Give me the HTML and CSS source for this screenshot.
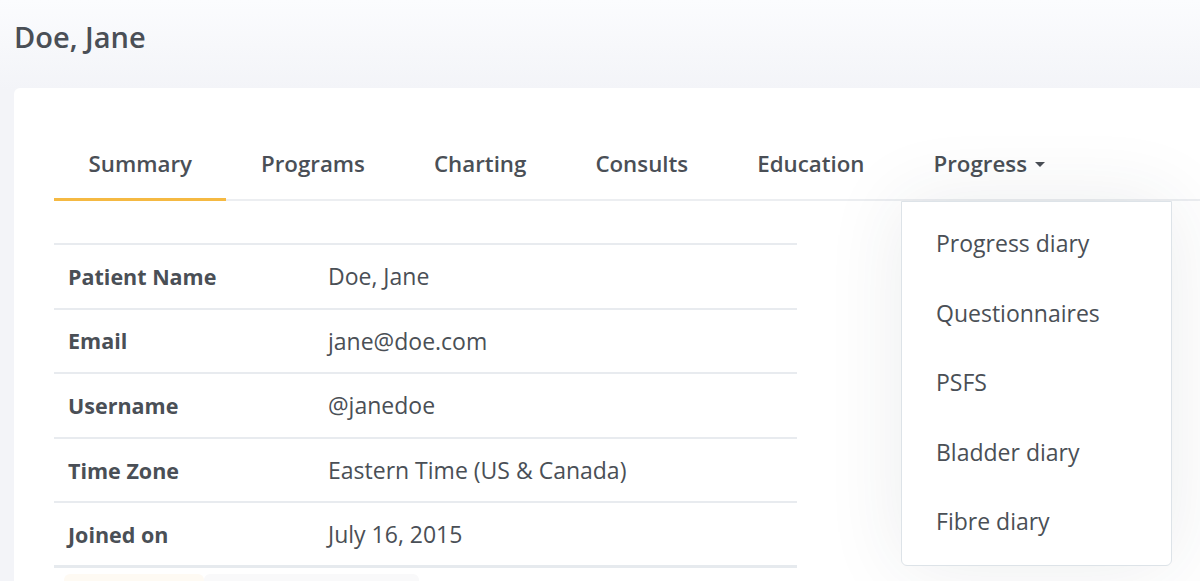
FILE: index.html
```html
<!DOCTYPE html>
<html lang="en">
<head>
<meta charset="utf-8">
<title>Doe, Jane</title>
<link rel="stylesheet" href="styles.css">
</head>
<body>
<header class="page-head">
  <h1 class="page-title">Doe, Jane</h1>
</header>
<main class="card">
  <nav class="tabs">
    <a class="tab active" href="#">Summary</a>
    <a class="tab" href="#">Programs</a>
    <a class="tab" href="#">Charting</a>
    <a class="tab" href="#">Consults</a>
    <a class="tab" href="#">Education</a>
    <div class="tab-wrap">
      <a class="tab dropdown-toggle" href="#">Progress<span class="caret"></span></a>
      <ul class="dropdown">
        <li><a href="#">Progress diary</a></li>
        <li><a href="#">Questionnaires</a></li>
        <li><a href="#">PSFS</a></li>
        <li><a href="#">Bladder diary</a></li>
        <li><a href="#">Fibre diary</a></li>
      </ul>
    </div>
  </nav>
  <table class="info">
    <tbody>
      <tr><th>Patient Name</th><td>Doe, Jane</td></tr>
      <tr><th>Email</th><td>jane@doe.com</td></tr>
      <tr><th>Username</th><td>@janedoe</td></tr>
      <tr><th>Time Zone</th><td>Eastern Time (US &amp; Canada)</td></tr>
      <tr><th>Joined on</th><td>July 16, 2015</td></tr>
    </tbody>
  </table>
  <div class="actions">
    <span class="ghost ghost-primary"></span>
    <span class="ghost ghost-secondary"></span>
  </div>
</main>
</body>
</html>
```

FILE: styles.css
```css
* { box-sizing: border-box; }
html, body { height: 100%; }
body {
  margin: 0;
  font-family: "Open Sans", Lato, sans-serif;
  color: #4a4f56;
  background: linear-gradient(#fbfcfe 0px, #f3f4f8 90px, #f3f4f8 100%);
  overflow: hidden;
}
a { color: inherit; text-decoration: none; }

.page-head {
  height: 88px;
  padding: 19px 14px 0;
}
.page-title {
  margin: 0;
  font-size: 29px;
  font-weight: 600;
  line-height: 36px;
}

.card {
  margin-left: 14px;
  background: #fff;
  border-radius: 6px 0 0 0;
  padding: 32px 0 0 40px;
  height: 600px;
}

.tabs {
  display: flex;
  border-bottom: 2px solid #eceef1;
}
.tab {
  display: block;
  padding: 29px 34.5px 19px;
  font-size: 22.3px;
  line-height: 30px;
  font-weight: 600;
  border-bottom: 3px solid transparent;
  margin-bottom: -2px;
}
.tab.active { border-bottom-color: #f5b942; }
.tab-wrap { position: relative; }
.caret {
  display: inline-block;
  margin-left: 8px;
  vertical-align: middle;
  border-top: 5px solid #4a4f56;
  border-left: 5px solid transparent;
  border-right: 5px solid transparent;
  position: relative;
  top: -2px;
}

.dropdown {
  position: absolute;
  left: 2px;
  top: calc(100% + 2px);
  width: 271px;
  margin: 0;
  padding: 7px 0 8px;
  list-style: none;
  background: #fff;
  border: 1px solid #dde3e8;
  border-radius: 0 0 6px 6px;
  box-shadow: 0 0 80px rgba(40, 50, 70, 0.09);
  z-index: 2;
}
.dropdown a {
  display: block;
  padding: 20px 34px;
  font-size: 23px;
  line-height: 29.5px;
}

.info {
  margin-top: 42px;
  width: 743px;
  border-collapse: collapse;
  font-size: 21.5px;
  border-top: 2px solid #e8ebef;
  border-bottom: 3px solid #e6eaee;
}
.info tr { border-bottom: 2px solid #e8ebef; }
.info th, .info td {
  text-align: left;
  padding: 0 14px;
  height: 64.6px;
}
.info th { width: 260px; font-weight: 700; }
.info td { font-weight: 400; font-size: 23px; }

.actions {
  display: flex;
  padding: 6px 0 0 10px;
}
.ghost { height: 30px; border-radius: 6px; }
.ghost-primary { width: 140px; background: #fefaf3; }
.ghost-secondary { width: 215px; background: #f9f9fa; }
```
